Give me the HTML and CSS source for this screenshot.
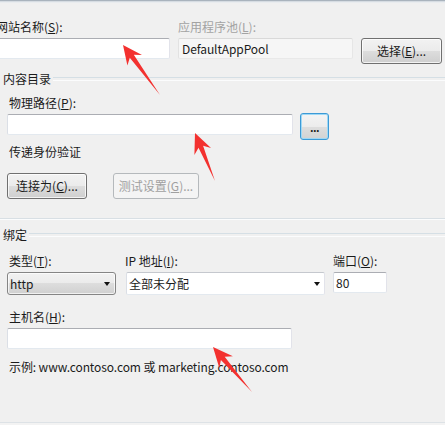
FILE: index.html
```html
<!DOCTYPE html>
<html lang="zh-CN">
<head>
<meta charset="utf-8">
<title>添加网站</title>
<link rel="stylesheet" href="styles.css">
</head>
<body>
<div class="dialog">
  <div class="frame-top"></div>

  <div class="site-row">
    <div class="field">
      <span class="lbl">网站名称(<u>S</u>):</span>
      <div class="input"></div>
    </div>
    <div class="field">
      <span class="lbl disabled">应用程序池(<u>L</u>):</span>
      <div class="input readonly">DefaultAppPool</div>
    </div>
    <div class="field">
      <span class="lbl">&nbsp;</span>
      <button class="btn">选择(<u>E</u>)...</button>
    </div>
  </div>

  <section class="group">
    <div class="group-head"><span>内容目录</span></div>
    <div class="group-body">
      <span class="lbl pad">物理路径(<u>P</u>):</span>
      <div class="path-row">
        <div class="input path"></div>
        <button class="btn browse">...</button>
      </div>
      <span class="lbl pad pass">传递身份验证</span>
      <div class="btn-row">
        <button class="btn connect">连接为(<u>C</u>)...</button>
        <button class="btn test" disabled>测试设置(<u>G</u>)...</button>
      </div>
    </div>
  </section>

  <div class="sep"></div>

  <section class="group binding">
    <div class="group-head"><span>绑定</span></div>
    <div class="group-body">
      <div class="bind-row">
        <div class="field type">
          <span class="lbl pad">类型(<u>T</u>):</span>
          <div class="select dd"><span>http</span><i class="caret"></i></div>
        </div>
        <div class="field ip">
          <span class="lbl">IP 地址(<u>I</u>):</span>
          <div class="select combo"><span>全部未分配</span><i class="caret"></i></div>
        </div>
        <div class="field port">
          <span class="lbl">端口(<u>O</u>):</span>
          <div class="input">80</div>
        </div>
      </div>
      <span class="lbl pad host-lbl">主机名(<u>H</u>):</span>
      <div class="input host"></div>
      <span class="lbl pad example">示例: www.contoso.com 或 marketing.contoso.com</span>
    </div>
  </section>

  <div class="bottom-edge"></div>

  <svg class="arrows" width="445" height="425" viewBox="0 0 445 425" aria-hidden="true">
    <polygon points="123,45 142,54.9 133.8,54.7 160,95 129.8,57.7 127.4,65.5"/>
    <polygon points="195,133 211,148 203.1,145.8 215,181 198.5,147.8 194.4,155"/>
    <polygon points="213,347 232.9,356.2 224.7,356.7 252,392 220.9,360 219.3,368"/>
  </svg>
</div>
</body>
</html>
```

FILE: styles.css
```css
* { box-sizing: border-box; }
html, body { margin: 0; padding: 0; }
body {
  background: #f0f0f0;
  font: 12px/16px "Noto Sans CJK SC", "Noto Sans", sans-serif;
  color: #1b1b1b;
  width: 445px;
  height: 425px;
  overflow: hidden;
}
u { text-decoration: underline; text-underline-offset: 1px; }

.dialog {
  position: relative;
  width: 445px;
  height: 425px;
  overflow: hidden;
  display: flex;
  flex-direction: column;
}
.frame-top {
  height: 3px;
  flex: none;
  background: linear-gradient(#a9b3bd 0 1px, #d6dce2 1px 2px, #e9ecef 2px 3px);
}

.lbl { display: block; height: 16px; white-space: nowrap; }
.lbl.disabled { color: #a3a3a3; }
.lbl.pad { padding-left: 2px; }

.field { display: flex; flex-direction: column; gap: 3px; }

.site-row {
  display: grid;
  grid-template-columns: 174px 175px 81px;
  column-gap: 8px;
  margin-left: -4px;
  padding-top: 16px;
}

.input {
  height: 21px;
  background: #fff;
  border: 1px solid;
  border-color: #abadb3 #e2e3ea #e3e9ef #dbdfe6;
  border-radius: 2px;
  padding: 1px 2px;
  line-height: 17px;
  white-space: nowrap;
}
.input.readonly {
  background: #f6f6f6;
  border-color: #d9d9d9 #e6e6e6 #e9e9e9 #e2e2e2;
  padding-left: 3px;
  letter-spacing: -0.1px;
}

.btn {
  height: 26px;
  border: 1px solid #707070;
  border-radius: 3px;
  background: linear-gradient(#f2f2f2 0%, #ebebeb 50%, #dddddd 50%, #cfcfcf 100%);
  box-shadow: inset 0 0 0 1px rgba(255, 255, 255, 0.75);
  font: inherit;
  color: #1b1b1b;
  padding: 0;
  text-align: center;
}
.btn:disabled {
  border-color: #b5b9bc;
  background: #f4f4f4;
  color: #a0a0a0;
  box-shadow: none;
}

.group { flex: none; }
.group-head {
  display: flex;
  align-items: center;
  gap: 2px;
  padding-left: 3px;
  margin-top: 7px;
  height: 16px;
}
.group-head::after {
  content: "";
  flex: 1;
  height: 2px;
  border-top: 1px solid #d5dfe5;
  border-bottom: 1px solid #fbfcfd;
}
.group-body { padding-left: 7px; display: flex; flex-direction: column; }
.group-body > .lbl:first-child { margin-top: 8px; }

.path-row { display: flex; align-items: flex-start; gap: 7px; margin-top: 2px; }
.input.path { width: 286px; margin-top: 1px; }
.btn.browse {
  width: 29px;
  height: 27px;
  border-color: #3c9ad6;
  box-shadow: inset 0 0 0 1px #9fd8f5;
  background: linear-gradient(#f4f4f4 0%, #ececec 50%, #dedede 50%, #d3d3d3 100%);
  font-size: 11px;
  font-weight: bold;
  line-height: 20px;
  letter-spacing: -0.5px;
}
.pass { margin-top: 4px; }
.btn-row { display: flex; gap: 26px; margin-top: 13px; }
.btn.connect { width: 80px; }
.btn.test { width: 86px; }

.sep {
  flex: none;
  margin-top: 19px;
  height: 2px;
  border-top: 1px solid #d8dfe4;
  border-bottom: 1px solid #fbfcfd;
}

.binding .group-head { margin-top: 7px; }
.bind-row { display: flex; margin-top: 10px; }
.field.type { width: 109px; }
.field.ip { width: 199px; margin-left: 10px; }
.field.ip .lbl { margin-left: -1px; }
.field.port { width: 54px; margin-left: 8px; }

.select {
  height: 23px;
  display: flex;
  align-items: center;
  justify-content: space-between;
  padding: 0 4px 0 2px;
  white-space: nowrap;
}
.select.dd {
  border: 1px solid #858585;
  border-radius: 3px;
  background: linear-gradient(#f2f2f2 0%, #ebebeb 50%, #dddddd 50%, #d0d0d0 100%);
  box-shadow: inset 0 0 0 1px rgba(255, 255, 255, 0.7);
  padding-right: 5px;
}
.select.combo {
  background: #fff;
  border: 1px solid;
  border-color: #c5c8ce #e2e3ea #e3e9ef #dbdfe6;
  border-radius: 2px;
}
.caret {
  width: 0;
  height: 0;
  border-left: 3.5px solid transparent;
  border-right: 3.5px solid transparent;
  border-top: 4px solid #111;
  margin-top: 1px;
}

.host-lbl { margin-top: 14px; }
.input.host { width: 285px; margin-top: 3px; }
.example { margin-top: 10px; letter-spacing: -0.1px; }

.bottom-edge {
  margin-top: auto;
  flex: none;
  height: 3px;
  border-top: 1px solid #dde2e6;
  background: #f3f3f3;
}

.arrows {
  position: absolute;
  left: 0;
  top: 0;
  pointer-events: none;
}
.arrows polygon { fill: #f3312f; }
```
